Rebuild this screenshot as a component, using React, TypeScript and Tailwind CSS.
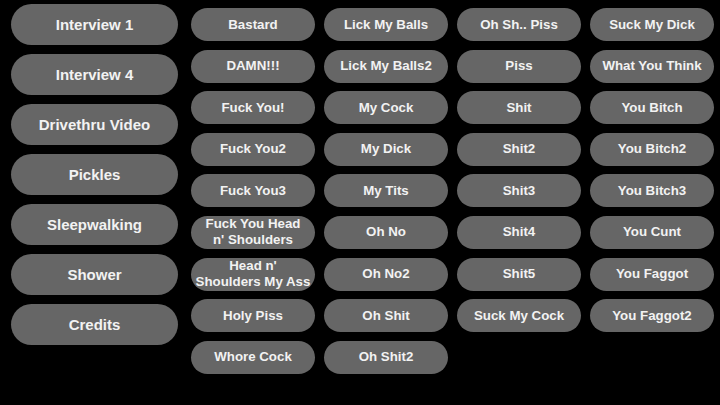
const mainItems = [
  "Interview 1",
  "Interview 4",
  "Drivethru Video",
  "Pickles",
  "Sleepwalking",
  "Shower",
  "Credits",
];

const soundColumns = [
  [
    "Bastard",
    "DAMN!!!",
    "Fuck You!",
    "Fuck You2",
    "Fuck You3",
    "Fuck You Head\nn' Shoulders",
    "Head n'\nShoulders My Ass",
    "Holy Piss",
    "Whore Cock",
  ],
  [
    "Lick My Balls",
    "Lick My Balls2",
    "My Cock",
    "My Dick",
    "My Tits",
    "Oh No",
    "Oh No2",
    "Oh Shit",
    "Oh Shit2",
  ],
  [
    "Oh Sh.. Piss",
    "Piss",
    "Shit",
    "Shit2",
    "Shit3",
    "Shit4",
    "Shit5",
    "Suck My Cock",
  ],
  [
    "Suck My Dick",
    "What You Think",
    "You Bitch",
    "You Bitch2",
    "You Bitch3",
    "You Cunt",
    "You Faggot",
    "You Faggot2",
  ],
];

export default function App() {
  return (
    <div className="flex h-[405px] w-[720px] overflow-hidden bg-black font-['Liberation_Sans',Arial,sans-serif] font-bold text-[#f2f2f2]">
      <div className="box-content flex w-[167px] flex-col gap-[9px] pl-[11px] pt-[4px]">
        {mainItems.map((label) => (
          <button
            key={label}
            className="flex h-[41px] w-[167px] items-center justify-center rounded-full bg-[#666666] text-[15px] leading-none"
          >
            {label}
          </button>
        ))}
      </div>

      <div className="ml-[13px] flex gap-[9px] pt-[8px]">
        {soundColumns.map((col, i) => (
          <div key={i} className="flex w-[124px] flex-col gap-[8.6px]">
            {col.map((label) => (
              <button
                key={label}
                className="flex h-[33px] w-[124px] items-center justify-center whitespace-pre-line rounded-full bg-[#666666] px-1 text-center text-[13.3px] leading-[16px]"
              >
                {label}
              </button>
            ))}
          </div>
        ))}
      </div>
    </div>
  );
}
